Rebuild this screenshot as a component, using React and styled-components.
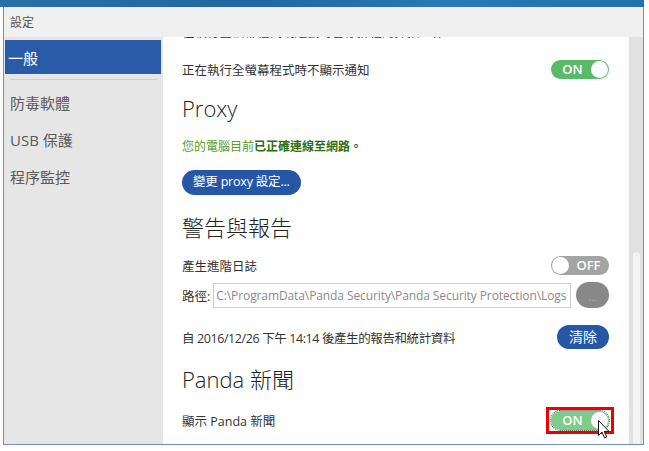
import React from 'react';
import styled, { createGlobalStyle } from 'styled-components';

const GlobalStyle = createGlobalStyle`
  html, body {
    margin: 0;
    padding: 0;
    background: #ffffff;
  }
  body {
    font-family: "Open Sans", "Noto Sans CJK TC", sans-serif;
    color: #333333;
  }
`;

const menuItems = ['防毒軟體', 'USB 保護', '程序監控'];

const App = () => (
  <Screen>
    <GlobalStyle />
    <DesktopStrip />
    <Window>
      <TitleBar>設定</TitleBar>
      <WindowBody>
        <Sidebar>
          <MenuItem $active>一般</MenuItem>
          <MenuDivider />
          <MenuList>
            {menuItems.map((item) => (
              <MenuItem key={item}>{item}</MenuItem>
            ))}
          </MenuList>
        </Sidebar>
        <Main>
          <Content>
            <SettingRow $height={24}>
              <RowLabel>在執行全螢幕程式或遊戲時暫停排程的掃描工作</RowLabel>
            </SettingRow>
            <SettingRow $height={32} $top={10}>
              <RowLabel>正在執行全螢幕程式時不顯示通知</RowLabel>
              <Toggle $on>
                <ToggleText $on>ON</ToggleText>
                <Knob $on />
              </Toggle>
            </SettingRow>

            <SectionTitle $top={8}>Proxy</SectionTitle>
            <StatusNote>
              您的電腦目前<strong>已正確連線至網路。</strong>
            </StatusNote>
            <PillButton $top={13}>變更 proxy 設定...</PillButton>

            <SectionTitle $top={17}>警告與報告</SectionTitle>
            <SettingRow $height={24} $top={11}>
              <RowLabel>產生進階日誌</RowLabel>
              <Toggle>
                <Knob />
                <ToggleText>OFF</ToggleText>
              </Toggle>
            </SettingRow>
            <PathRow>
              <RowLabel>路徑:</RowLabel>
              <PathField>C:\ProgramData\Panda Security\Panda Security Protection\Logs</PathField>
              <BrowseButton>...</BrowseButton>
            </PathRow>
            <SettingRow $height={24} $top={17}>
              <RowLabel $tight>自 2016/12/26 下午 14:14 後產生的報告和統計資料</RowLabel>
              <PillButton $small>清除</PillButton>
            </SettingRow>

            <SectionTitle $top={15}>Panda 新聞</SectionTitle>
            <SettingRow $height={32} $top={10}>
              <RowLabel>顯示 Panda 新聞</RowLabel>
              <Highlight>
                <Toggle $on $hover $focused>
                  <ToggleText $on>ON</ToggleText>
                  <Knob $on />
                </Toggle>
                <Cursor viewBox="0 0 12 19" width="12" height="19">
                  <path
                    d="M0.5 0.5 L0.5 15.5 L4 12.2 L6.6 18 L8.8 17 L6.3 11.4 L11 11.4 Z"
                    fill="#ffffff"
                    stroke="#111111"
                    strokeWidth="1"
                    strokeLinejoin="round"
                  />
                </Cursor>
              </Highlight>
            </SettingRow>
          </Content>
        </Main>
        <ScrollTrack>
          <ScrollThumb />
        </ScrollTrack>
      </WindowBody>
    </Window>
  </Screen>
);

const Screen = styled.div`
  width: 644px;
  height: 451px;
`;

const DesktopStrip = styled.div`
  height: 7px;
  background: linear-gradient(90deg, #2a6fa6 0%, #1f68a3 40%, #2b78b8 70%, #2270ae 100%);
`;

const Window = styled.div`
  box-sizing: border-box;
  margin-left: 3px;
  width: 641px;
  height: 438px;
  border: 1px solid #7590b8;
  border-top: none;
  display: flex;
  flex-direction: column;
  background: #f0f0f0;
`;

const TitleBar = styled.div`
  height: 30px;
  flex-shrink: 0;
  display: flex;
  align-items: center;
  padding-left: 6px;
  font-size: 12px;
  color: #555555;
  background: #f0f0f0;
`;

const WindowBody = styled.div`
  flex: 1;
  display: flex;
  min-height: 0;
`;

const Sidebar = styled.nav`
  width: 159px;
  flex-shrink: 0;
  background: #e6e6e6;
  padding-top: 3px;
  box-sizing: border-box;
`;

const MenuList = styled.div`
  margin-top: 4px;
`;

const MenuItem = styled.div`
  height: ${({ $active }) => ($active ? '34px' : '37px')};
  display: flex;
  align-items: center;
  margin-left: ${({ $active }) => ($active ? '1px' : '0')};
  width: ${({ $active }) => ($active ? '156px' : 'auto')};
  padding-left: ${({ $active }) => ($active ? '3px' : '6px')};
  box-sizing: border-box;
  font-size: 15px;
  color: ${({ $active }) => ($active ? '#ffffff' : '#5a5a5a')};
  background: ${({ $active }) => ($active ? '#2a5ba8' : 'transparent')};
`;

const MenuDivider = styled.div`
  height: 1px;
  margin: 5px 6px 0 6px;
  background: #cdcdcd;
`;

const Main = styled.main`
  flex: 1;
  background: #ffffff;
  overflow: hidden;
`;

const Content = styled.div`
  margin-top: -18px;
  padding: 0 20px 0 19px;
  display: flex;
  flex-direction: column;
  align-items: flex-start;
`;

const SettingRow = styled.div`
  align-self: stretch;
  height: ${({ $height }) => $height}px;
  margin-top: ${({ $top = 0 }) => $top}px;
  display: flex;
  align-items: center;
  justify-content: space-between;
`;

const RowLabel = styled.span`
  font-size: 12.5px;
  color: #333333;
  white-space: nowrap;
  letter-spacing: ${({ $tight }) => ($tight ? '-0.4px' : '0')};
`;

const SectionTitle = styled.h2`
  margin: ${({ $top = 0 }) => $top}px 0 0 0;
  height: 30px;
  line-height: 30px;
  font-size: 22px;
  font-weight: 300;
  color: #222222;
`;

const StatusNote = styled.p`
  margin: 14px 0 0 0;
  height: 20px;
  line-height: 20px;
  font-size: 12px;
  color: #5a9a2c;
  strong {
    color: #2f6e12;
    font-weight: 700;
  }
`;

const PillButton = styled.button`
  margin-top: ${({ $top = 0 }) => $top}px;
  height: ${({ $small }) => ($small ? '24px' : '25px')};
  padding: 0 ${({ $small }) => ($small ? '12px' : '11px')};
  border: none;
  border-radius: 13px;
  background: #2557a6;
  color: #ffffff;
  font-family: inherit;
  font-size: ${({ $small }) => ($small ? '14px' : '12.5px')};
  letter-spacing: ${({ $small }) => ($small ? '0' : '-0.2px')};
  line-height: 1;
  white-space: nowrap;
`;

const Toggle = styled.div`
  width: 58px;
  height: 19px;
  box-sizing: border-box;
  border-radius: 10px;
  display: flex;
  align-items: center;
  justify-content: space-between;
  padding: 0 1px;
  background: ${({ $on, $hover }) => ($on ? ($hover ? '#7fcb89' : '#5cb96b') : '#a4a4a4')};
  outline: ${({ $focused }) => ($focused ? '1px dotted #333333' : 'none')};
  outline-offset: 0;
`;

const ToggleText = styled.span`
  flex: 1;
  text-align: center;
  font-size: 13px;
  font-weight: 600;
  color: #ffffff;
  padding-left: ${({ $on }) => ($on ? '2px' : '0')};
`;

const Knob = styled.span`
  width: 17px;
  height: 17px;
  border-radius: 50%;
  background: #ffffff;
  flex-shrink: 0;
`;

const PathRow = styled.div`
  align-self: stretch;
  margin-top: 5px;
  height: 26px;
  display: flex;
  align-items: center;
  gap: 3px;
`;

const PathField = styled.div`
  box-sizing: border-box;
  width: 358px;
  height: 25px;
  border: 1px solid #cccccc;
  display: flex;
  align-items: center;
  padding-left: 2px;
  font-size: 12px;
  color: #8a8a8a;
  white-space: nowrap;
  overflow: hidden;
  letter-spacing: -0.1px;
`;

const BrowseButton = styled.div`
  margin-left: 2px;
  width: 33px;
  height: 26px;
  border-radius: 13px;
  background: #888888;
  color: #b0b0b0;
  font-size: 10px;
  display: flex;
  align-items: flex-end;
  justify-content: center;
  padding-bottom: 4px;
  box-sizing: border-box;
`;

const Highlight = styled.div`
  position: relative;
  border: 3px solid #ee0000;
  padding: 1px 2px;
  margin-right: -5px;
`;

const Cursor = styled.svg`
  position: absolute;
  left: 49px;
  top: 10px;
`;

const ScrollTrack = styled.div`
  width: 14px;
  flex-shrink: 0;
  background: #e1e1e1;
  display: flex;
  flex-direction: column;
  padding: 215px 3px 0 4px;
  box-sizing: border-box;
`;

const ScrollThumb = styled.div`
  flex: 1;
  border-radius: 4px 4px 0 0;
  background: #f3f3f3;
`;

export default App;
